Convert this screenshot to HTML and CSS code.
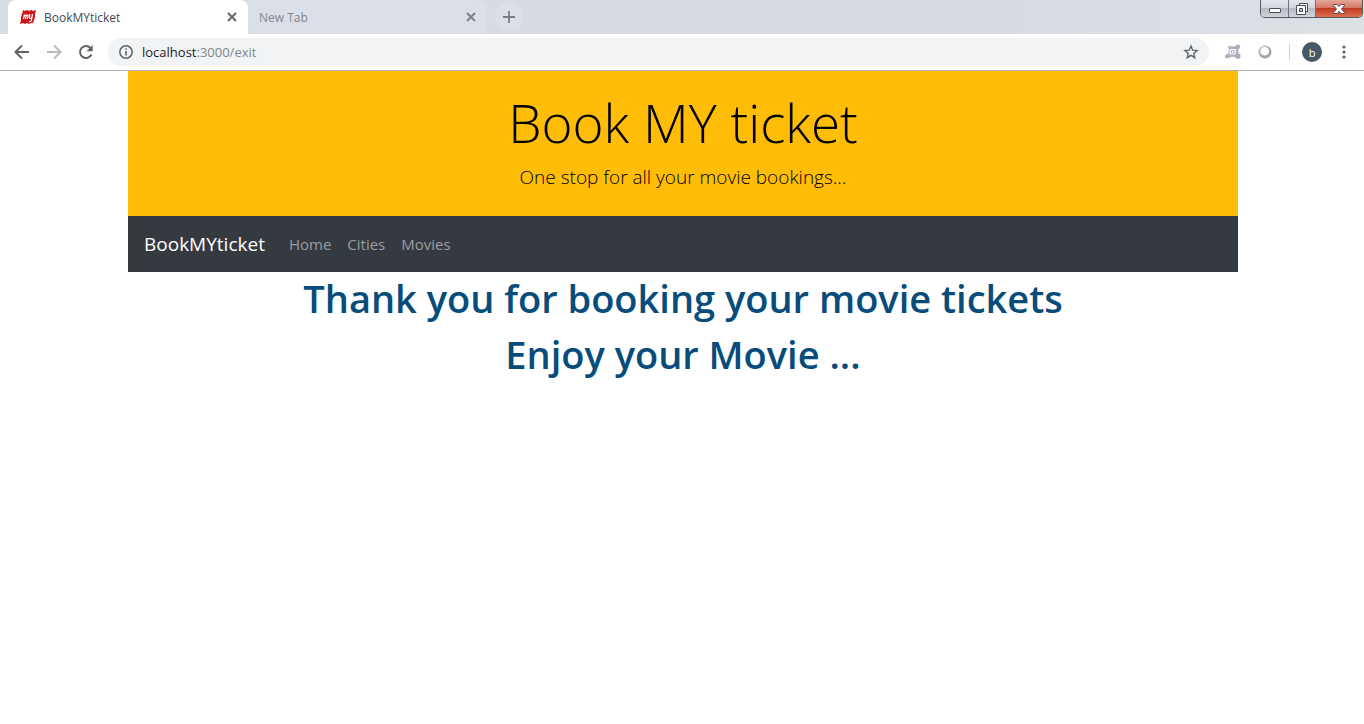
FILE: index.html
```html
<!DOCTYPE html>
<html lang="en">
<head>
<meta charset="utf-8">
<title>BookMYticket</title>
<link rel="stylesheet" href="styles.css">
</head>
<body>
<div class="chrome">
  <div class="tabstrip">
    <div class="tab tab-active">
      <svg class="favicon" width="16" height="16" viewBox="0 0 16 16"><path fill="#d0131b" d="M3 1l2 1 2-1 2 1 2-1 2 1 3-1-1 4 0 3-1 3-1 3-2 0-2 1-2-1-2 1-2-1-3 1 1-4 0-3 1-3z"/><path fill="none" stroke="#fff" stroke-width="1.200" d="M3.500 10l1-4.500M4.300 7c1-1.500 2-1 1.800 0l-.6 3M6.200 7c1-1.500 2-1 1.800 0l-.6 3M10 5c-1 3-.5 4.500.5 4.500s1.500-1 2-4.500l-1 6c-.3 1.500-1.200 2-2.500 1.500"/></svg>
      <span class="tab-title">BookMYticket</span>
      <button class="tab-close" aria-label="Close tab"><svg width="10" height="10" viewBox="0 0 10 10"><path d="M1 1l8 8M9 1l-8 8"/></svg></button>
    </div>
    <div class="tab tab-idle">
      <span class="tab-title">New Tab</span>
      <button class="tab-close" aria-label="Close tab"><svg width="10" height="10" viewBox="0 0 10 10"><path d="M1 1l8 8M9 1l-8 8"/></svg></button>
    </div>
    <button class="new-tab" aria-label="New tab"><svg width="12" height="12" viewBox="0 0 12 12"><path d="M6 0v12M0 6h12"/></svg></button>
    <div class="window-buttons">
      <button class="win win-min" aria-label="Minimize"><svg width="12" height="5" viewBox="0 0 12 5"><rect x=".5" y=".5" width="11" height="4" rx=".5" fill="#fff" stroke="#4a4d5e"/></svg></button>
      <button class="win win-max" aria-label="Restore"><svg width="13" height="12" viewBox="0 0 13 12"><path fill="#fff" stroke="#4a4d5e" d="M3.500.5h8v8h-8z"/><path fill="#fff" stroke="#4a4d5e" d="M.5 2.500h9v9h-9z"/><path fill="#b5b9c2" stroke="#4a4d5e" d="M3.500 5.500h3v3h-3z"/></svg></button>
      <button class="win win-close" aria-label="Close"><svg width="12" height="10" viewBox="0 0 12 10"><path fill="#fff" stroke="#57404a" stroke-width=".9" d="M.5.5h3.700L6 2.700 7.800.5h3.700v1L8.500 5l3 3.500v1H7.800L6 7.300 4.200 9.500H.5v-1l3-3.500-3-3.500z"/></svg></button>
    </div>
  </div>
  <div class="toolbar">
    <button class="tool" aria-label="Back"><svg width="16" height="16" viewBox="0 0 16 16" stroke="#5f6368"><path d="M15 8H2M8 1.500L1.500 8 8 14.500"/></svg></button>
    <button class="tool" aria-label="Forward"><svg width="16" height="16" viewBox="0 0 16 16" stroke="#bababc"><path d="M1 8h13M8 1.500L14.500 8 8 14.500"/></svg></button>
    <button class="tool" aria-label="Reload"><svg width="16" height="16" viewBox="0 0 16 16" stroke="#5f6368"><path d="M13.500 10.500A6 6 0 1 1 12.500 4"/><path fill="#5f6368" stroke="none" d="M14.700 1v6.300H8.500z"/></svg></button>
    <div class="omnibox">
      <svg width="14" height="14" viewBox="0 0 14 14"><circle cx="7" cy="7" r="6.200" fill="none" stroke="#5f6368" stroke-width="1.500"/><path stroke="#5f6368" stroke-width="1.600" d="M7 6v4.500M7 3.200v1.600"/></svg>
      <span class="url"><span class="host">localhost</span>:3000/exit</span>
      <button class="star" aria-label="Bookmark this page"><svg width="16" height="16" viewBox="0 0 16 16"><path fill="none" stroke="#5f6368" stroke-width="1.400" d="M8 2l1.700 4.200 4.400.3-3.400 2.900 1.100 4.300L8 11.300l-3.800 2.400 1.100-4.300-3.400-2.900 4.400-.3z"/></svg></button>
    </div>
    <div class="extensions">
      <svg width="18" height="16" viewBox="0 0 18 16"><path fill="#adafbf" d="M4 2l6 .5C11.500 2.500 12 .5 14 .5c2.500 0 3 3.500.8 4.300-1 .8-.8 4 .2 4.800 2.500 1.200 2 5.400-.5 5.400-2.300 0-2.500-1.800-4-2-2-.3-3.500-.5-5 .5-2 1.500-4.800.8-4.500-1.300.3-2 3-2 3.500-3.500.5-1.500.500-4.500-.5-6.700z"/><path fill="none" stroke="#fff" stroke-width="1.200" d="M6.500 5.500h5l-.6 4.500H6z"/><circle cx="8.800" cy="7.700" r="1" fill="#fff"/></svg>
      <svg width="14" height="14" viewBox="0 0 14 14"><circle cx="7" cy="7" r="6.500" fill="#a3a3a3"/><circle cx="6.300" cy="5.900" r="4.900" fill="#d2d2d2"/><circle cx="6.800" cy="6.200" r="4" fill="#fff"/></svg>
    </div>
    <button class="avatar">b</button>
    <button class="menu" aria-label="Menu"><svg width="4" height="14" viewBox="0 0 4 14" fill="#5f6368"><circle cx="2" cy="2" r="1.600"/><circle cx="2" cy="7" r="1.600"/><circle cx="2" cy="12" r="1.600"/></svg></button>
  </div>
</div>
<main class="page">
  <div class="container">
    <header class="banner">
      <h1 class="display">Book MY ticket</h1>
      <p class="lead">One stop for all your movie bookings...</p>
    </header>
    <nav class="navbar">
      <a class="brand" href="#">BookMYticket</a>
      <a class="link" href="#">Home</a>
      <a class="link" href="#">Cities</a>
      <a class="link" href="#">Movies</a>
    </nav>
    <h2 class="message">Thank you for booking your movie tickets</h2>
    <h2 class="message">Enjoy your Movie ...</h2>
  </div>
</main>
</body>
</html>
```
FILE: styles.css
```css
* { box-sizing: border-box; }
body {
  margin: 0;
  background: #fff;
  font-family: "Open Sans", "Noto Sans", sans-serif;
}
button {
  display: flex;
  align-items: center;
  justify-content: center;
  padding: 0;
  border: 0;
  background: none;
  font-family: inherit;
}
svg { display: block; flex: none; }

.chrome { border-bottom: 1px solid #b0b1b3; }
.tabstrip {
  display: flex;
  height: 34px;
  padding-left: 8px;
  background: linear-gradient(90deg, #d8dde4, #d6dae3 70%, #dce1e5);
}
.tab {
  display: flex;
  align-items: center;
  width: 240px;
  padding: 0 11px;
  font-size: 12px;
}
.tab-active {
  gap: 8px;
  padding-left: 12px;
  border-radius: 8px 8px 0 0;
  background: #fff;
  color: #45494d;
}
.tab-idle {
  width: 239px;
  border-radius: 0 8px 8px 8px;
  background: #dbdfe7;
  color: #85868c;
}
.tab-title { flex: 1; }
.tab-close svg, .new-tab svg { fill: none; stroke: #5f6368; stroke-width: 1.8; }
.tab-idle .tab-close svg, .new-tab svg { stroke: #7a7d86; }
.new-tab {
  align-self: center;
  width: 28px;
  height: 28px;
  margin-left: 8px;
  border-radius: 50%;
  background: #dbdfe7;
}
.window-buttons {
  display: flex;
  height: 18px;
  margin-left: auto;
  margin-right: 1px;
  border: 1px solid #555966;
  border-top: 0;
  border-radius: 0 0 5px 5px;
  overflow: hidden;
}
.win {
  width: 28px;
  border-right: 1px solid #6f7380;
  background: linear-gradient(#e2e5ea, #d2d5dc 48%, #b7bbc5 50%, #d0d3da);
}
.win-min { padding-top: 4px; }
.win-max { width: 27px; }
.win-close {
  width: 46px;
  border-right: 0;
  background: linear-gradient(#e6a79b, #d6735f 48%, #c03c22 50%, #df6f50);
}

.toolbar {
  display: flex;
  align-items: center;
  height: 36px;
  padding: 0 18px 0 14px;
}
.tool { width: 16px; margin-right: 16px; }
.tool svg { fill: none; stroke-width: 2; }
.omnibox {
  display: flex;
  flex: 1;
  align-items: center;
  gap: 9px;
  height: 28px;
  margin-left: -2px;
  padding: 0 10px 0 11px;
  border-radius: 14px;
  background: #f1f3f4;
}
.url { flex: 1; color: #80868b; font-size: 13px; }
.host { color: #202124; }
.extensions {
  display: flex;
  align-items: center;
  gap: 16px;
  height: 16px;
  margin-left: 15px;
  padding-right: 17px;
  border-right: 1px solid #d0d2d5;
}
.avatar {
  width: 20px;
  height: 20px;
  margin: 0 20px 0 12px;
  border-radius: 50%;
  background: #455a64;
  color: #fff;
  font-size: 11px;
}

.page { padding: 0 16px 0 18px; }
.container { max-width: 1110px; margin: 0 auto; }
.banner {
  padding: 20px 16px 24px;
  background: #ffbd08;
  color: #000;
  text-align: center;
}
.display {
  margin: 0 0 8px;
  font-size: 53px;
  font-weight: 300;
  line-height: 64px;
}
.lead {
  margin: 0;
  font-size: 19px;
  font-weight: 300;
  line-height: 29px;
}
.navbar {
  display: flex;
  align-items: center;
  gap: 16px;
  height: 56px;
  padding: 0 16px;
  background: #353a41;
}
.navbar a { text-decoration: none; }
.brand { margin-right: 8px; color: #fff; font-size: 19px; }
.link { color: #9a9da0; font-size: 15px; }
.message {
  margin: 0 0 4px;
  color: #084c7c;
  font-size: 38px;
  font-weight: 600;
  line-height: 52px;
  text-align: center;
}
```
